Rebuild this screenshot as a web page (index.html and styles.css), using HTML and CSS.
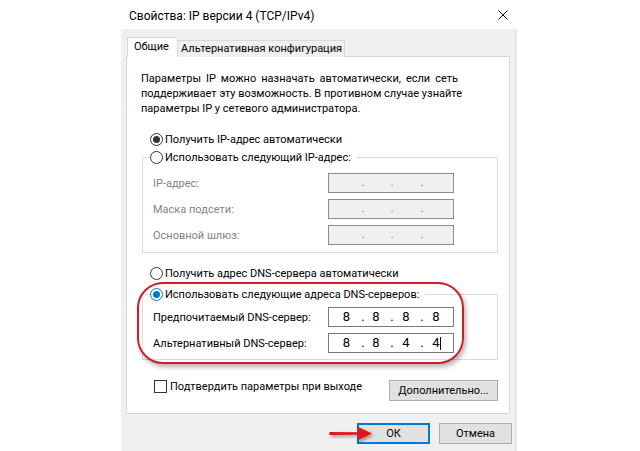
FILE: index.html
```html
<!DOCTYPE html>
<html lang="ru">
<head>
<meta charset="utf-8">
<title>Свойства: IP версии 4 (TCP/IPv4)</title>
<link rel="stylesheet" href="styles.css">
</head>
<body>
<div class="dialog">
  <div class="titlebar">
    <span class="title">Свойства: IP версии 4 (TCP/IPv4)</span>
    <svg class="close" width="10" height="10" viewBox="0 0 10 10"><path d="M0.5 0.5L9.5 9.5M9.5 0.5L0.5 9.5" stroke="#111" stroke-width="1" fill="none"/></svg>
  </div>
  <div class="frame">
    <div class="tabs">
      <div class="tab tab-active">Общие</div>
      <div class="tab tab-alt">Альтернативная конфигурация</div>
    </div>
    <div class="panel">
      <p class="intro"><span>Параметры IP можно назначать автоматически, если сеть</span><span>поддерживает эту возможность. В противном случае узнайте</span><span>параметры IP у сетевого администратора.</span></p>

      <div class="option option-first"><span class="radio radio-on"></span>Получить IP-адрес автоматически</div>

      <fieldset class="group group-ip">
        <legend class="option"><span class="radio"></span>Использовать следующий IP-адрес:</legend>
        <div class="rows">
          <span class="label disabled">IP-адрес:</span>
          <div class="ipfield ipfield-off"><span></span><i>.</i><span></span><i>.</i><span></span><i>.</i><span></span></div>
          <span class="label disabled">Маска подсети:</span>
          <div class="ipfield ipfield-off"><span></span><i>.</i><span></span><i>.</i><span></span><i>.</i><span></span></div>
          <span class="label disabled">Основной шлюз:</span>
          <div class="ipfield ipfield-off"><span></span><i>.</i><span></span><i>.</i><span></span><i>.</i><span></span></div>
        </div>
      </fieldset>

      <div class="option option-dns"><span class="radio"></span>Получить адрес DNS-сервера автоматически</div>

      <fieldset class="group group-dns">
        <legend class="option"><span class="radio radio-on radio-focus"></span>Использовать следующие адреса DNS-серверов:</legend>
        <div class="rows">
          <span class="label">Предпочитаемый DNS-сервер:</span>
          <div class="ipfield"><span>8</span><i>.</i><span>8</span><i>.</i><span>8</span><i>.</i><span>8</span></div>
          <span class="label">Альтернативный DNS-сервер:</span>
          <div class="ipfield"><span>8</span><i>.</i><span>8</span><i>.</i><span>4</span><i>.</i><span class="caret">4</span></div>
        </div>
      </fieldset>

      <div class="footer-row">
        <div class="option option-check"><span class="checkbox"></span>Подтвердить параметры при выходе</div>
        <button class="btn btn-advanced" type="button">Дополнительно...</button>
      </div>

      <div class="highlight"></div>
    </div>
    <div class="actions">
      <button class="btn btn-default" type="button">ОК</button>
      <button class="btn" type="button">Отмена</button>
      <svg class="pointer" width="50" height="20" viewBox="0 0 50 20">
        <defs>
          <filter id="soft" x="-20%" y="-40%" width="150%" height="190%">
            <feDropShadow dx="1.5" dy="2" stdDeviation="1.5" flood-color="#000" flood-opacity="0.35"/>
          </filter>
        </defs>
        <path d="M3 8 Q1 9.5 3 11 L31 10.8 L30 16.5 Q38 13 45 9.5 Q38 6 30 2.5 L31 8.2 Z" fill="#e0141b" filter="url(#soft)"/>
      </svg>
    </div>
  </div>
</div>
</body>
</html>
```

FILE: styles.css
```css
* {
  box-sizing: border-box;
}

html, body {
  margin: 0;
  padding: 0;
  background: #fff;
}

body {
  font-family: Roboto, "Noto Sans", sans-serif;
  font-size: 11px;
  color: #000;
  overflow: hidden;
}

.dialog {
  margin-left: 121px;
  width: 396px;
  height: 451px;
  display: flex;
  flex-direction: column;
}

/* window caption */
.titlebar {
  height: 29px;
  display: flex;
  align-items: center;
  justify-content: space-between;
  padding: 3px 9px 0 8px;
  background: #fff;
}

.title {
  font-size: 12px;
  line-height: 16px;
  color: #000;
}

.close {
  display: block;
  margin-top: -2px;
}

/* client area */
.frame {
  flex: 1;
  background: #f0f0f0;
  border-right: 2px solid #e7e7e7;
  padding: 9px 0 0 5px;
  position: relative;
}

.tabs {
  display: flex;
  align-items: flex-end;
  height: 19px;
  margin-left: 1px;
  margin-bottom: -1px;
  position: relative;
  z-index: 1;
}

.tab {
  height: 17px;
  line-height: 15px;
  border: 1px solid #d9d9d9;
  border-bottom: none;
  background: #f0f0f0;
  white-space: nowrap;
}

.tab-alt {
  width: 168px;
  padding-left: 3px;
}

.tab-active {
  height: 20px;
  width: 50px;
  line-height: 17px;
  padding: 0 0 0 6px;
  background: #fff;
  border-right: none;
}

.panel {
  width: 384px;
  height: 358px;
  background: #fff;
  border: 1px solid #d9d9d9;
  padding: 14px 0 0 14px;
  position: relative;
}

/* first two lines run edge to edge, the last one is left ragged */
.intro {
  margin: 0;
  width: 317px;
  line-height: 15px;
  white-space: nowrap;
}

.intro span {
  display: block;
}

.intro span:not(:last-child) {
  text-align: justify;
  text-align-last: justify;
}

.option {
  display: flex;
  align-items: center;
  line-height: 15px;
  white-space: nowrap;
}

.option-first {
  margin: 16px 0 0 9px;
}

.radio {
  width: 13px;
  height: 13px;
  border: 1px solid #333;
  border-radius: 50%;
  margin-right: 2px;
  display: flex;
  align-items: center;
  justify-content: center;
  flex: none;
}

.radio-on::after {
  content: "";
  width: 7px;
  height: 7px;
  border-radius: 50%;
  background: #333;
}

.radio-focus {
  border-color: #0078d7;
}

.radio-focus::after {
  background: #0078d7;
}

.checkbox {
  width: 13px;
  height: 13px;
  border: 1px solid #333;
  margin-right: 3px;
  flex: none;
}

/* group boxes */
.group {
  margin: 3px 0 0 1px;
  width: 356px;
  min-width: 0;
  border: 1px solid #dcdcdc;
  padding: 0 0 7px 10px;
}

.group legend {
  padding: 0 6px 0 0;
  margin-left: -3px;
}

.group-ip .rows {
  padding-top: 8px;
}

.group-dns {
  margin-top: 6px;
  padding-bottom: 6px;
}

.group-dns .rows {
  padding-top: 5px;
}

.rows {
  display: grid;
  grid-template-columns: 175px 126px;
  grid-auto-rows: 20px;
  row-gap: 6px;
  align-items: center;
}

.label {
  line-height: 15px;
  white-space: nowrap;
}

.disabled {
  color: #838383;
}

.option-dns {
  margin: 13px 0 0 9px;
}

/* IP address control */
.ipfield {
  height: 20px;
  border: 1px solid #7a7a7a;
  background: #fff;
  display: grid;
  grid-template-columns: 28px 6px 20px 12px 16px 16px 12px;
  align-items: center;
  padding-left: 3px;
  font-size: 13px;
  line-height: 18px;
}

.ipfield span,
.ipfield i {
  font-style: normal;
  text-align: center;
}

.ipfield span:first-child {
  text-align: right;
  padding-right: 10px;
}

.ipfield-off {
  background: #f0f0f0;
  border-color: #8c8c8c;
}

.ipfield-off i {
  color: #6d6d6d;
  font-size: 10px;
}

.caret {
  position: relative;
}

.caret::after {
  content: "";
  position: absolute;
  top: 3px;
  height: 13px;
  left: calc(50% + 4px);
  width: 1px;
  background: #000;
}

.footer-row {
  display: flex;
  align-items: flex-start;
  justify-content: space-between;
  margin-top: 16px;
  width: 357px;
  padding-left: 13px;
}

.option-check {
  margin-top: 3px;
}

.btn {
  font-family: inherit;
  font-size: 11px;
  color: #000;
  background: #e1e1e1;
  border: 1px solid #adadad;
  height: 21px;
  padding: 0;
  line-height: 18px;
}

.btn-advanced {
  width: 109px;
  margin-top: 4px;
}

.actions {
  display: flex;
  justify-content: flex-end;
  gap: 9px;
  margin-top: 9px;
  width: 391px;
  padding-right: 5px;
  position: relative;
}

.actions .btn {
  width: 73px;
}

.btn-default {
  border: 2px solid #0078d7;
}

/* red annotation drawn over the DNS block */
.highlight {
  position: absolute;
  left: 10px;
  top: 225px;
  width: 327px;
  height: 82px;
  border: 2.5px solid #c8202c;
  border-radius: 26px;
  box-shadow: 2px 3px 5px rgba(0, 0, 0, 0.3);
  pointer-events: none;
}

.pointer {
  position: absolute;
  left: 201px;
  top: 1px;
}
```
